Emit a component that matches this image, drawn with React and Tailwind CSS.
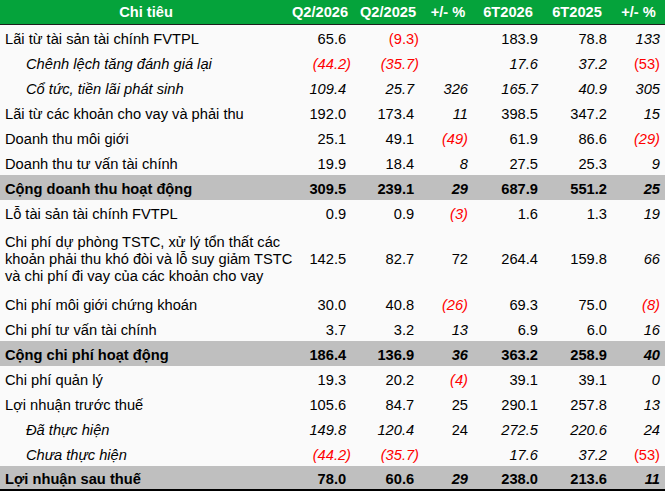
import React from "react";

const COLS = "grid grid-cols-[286px_68px_68px_52px_68px_70px_53px]";

const rows = [
  { l: "Lãi từ tài sản tài chính FVTPL", t: "n", v: ["65.6", "(9.3)", "", "183.9", "78.8", "133"], it: "nnnnni" },
  { l: "Chênh lệch tăng đánh giá lại", t: "s", v: ["(44.2)", "(35.7)", "", "17.6", "37.2", "(53)"], it: "iiniin" },
  { l: "Cổ tức, tiền lãi phát sinh", t: "s", v: ["109.4", "25.7", "326", "165.7", "40.9", "305"], it: "iiiiii" },
  { l: "Lãi từ các khoản cho vay và phải thu", t: "n", v: ["192.0", "173.4", "11", "398.5", "347.2", "15"], it: "nninni" },
  { l: "Doanh thu môi giới", t: "n", v: ["25.1", "49.1", "(49)", "61.9", "86.6", "(29)"], it: "nninni" },
  { l: "Doanh thu tư vấn tài chính", t: "n", v: ["19.9", "18.4", "8", "27.5", "25.3", "9"], it: "nninni" },
  { l: "Cộng doanh thu hoạt động", t: "t", v: ["309.5", "239.1", "29", "687.9", "551.2", "25"], it: "nninni" },
  { l: "Lỗ tài sản tài chính FVTPL", t: "n", v: ["0.9", "0.9", "(3)", "1.6", "1.3", "19"], it: "nninni" },
  {
    l: ["Chi phí dự phòng TSTC, xử lý tổn thất các", "khoản phải thu khó đòi và lỗ suy giảm TSTC", "và chi phí đi vay của các khoản cho vay"],
    t: "n", tall: true, v: ["142.5", "82.7", "72", "264.4", "159.8", "66"], it: "nnnnni",
  },
  { l: "Chi phí môi giới chứng khoán", t: "n", v: ["30.0", "40.8", "(26)", "69.3", "75.0", "(8)"], it: "nninni" },
  { l: "Chi phí tư vấn tài chính", t: "n", v: ["3.7", "3.2", "13", "6.9", "6.0", "16"], it: "nninni" },
  { l: "Cộng chi phí hoạt động", t: "t", v: ["186.4", "136.9", "36", "363.2", "258.9", "40"], it: "nninni" },
  { l: "Chi phí quản lý", t: "n", v: ["19.3", "20.2", "(4)", "39.1", "39.1", "0"], it: "nninni" },
  { l: "Lợi nhuận trước thuế", t: "n", v: ["105.6", "84.7", "25", "290.1", "257.8", "13"], it: "nnnnni" },
  { l: "Đã thực hiện", t: "s", v: ["149.8", "120.4", "24", "272.5", "220.6", "24"], it: "iiniii" },
  { l: "Chưa thực hiện", t: "s", v: ["(44.2)", "(35.7)", "", "17.6", "37.2", "(53)"], it: "iiniin" },
  { l: "Lợi nhuận sau thuế", t: "t", last: true, v: ["78.0", "60.6", "29", "238.0", "213.6", "11"], it: "nninni" },
];

const PADS = ["pr-[3px]", "pr-[3px]", "pr-[6px]", "pr-[4px]", "pr-[5px]", "pr-[5px]"];

function Cell({ value, italic, idx }) {
  const neg = value.startsWith("(");
  const padParen = (idx === 0 || idx === 1) && value && !neg;
  return (
    <div className={`text-right whitespace-nowrap ${PADS[idx]} ${italic ? "italic" : ""} ${neg ? "text-[#ff0000]" : ""}`}>
      {value}
      {padParen && <span className="invisible">)</span>}
    </div>
  );
}

const HEADS = ["Q2/2026", "Q2/2025", "+/- %", "6T2026", "6T2025", "+/- %"];

export default function App() {
  return (
    <div
      className="w-[665px] h-[491px] overflow-hidden bg-[#fafafa] text-black text-[14.67px] leading-[17px]"
      style={{ fontFamily: '"Liberation Sans", Arial, sans-serif' }}
    >
      <div className={`${COLS} h-[25px] items-center bg-[#05a33b] border-b border-[#1e1e1e] text-white font-bold`}>
        <div className="text-center pl-[6px]">Chi tiêu</div>
        {HEADS.map((h, i) => (
          <div key={i} className="text-center whitespace-nowrap">
            {h}
          </div>
        ))}
      </div>
      {rows.map((r, ri) => {
        const total = r.t === "t";
        return (
          <div
            key={ri}
            className={`${COLS} items-center pt-[3px] ${r.tall ? "h-[66px]" : "h-[25px]"} ${total ? "bg-[#bfbfbf] font-bold" : ""} ${r.last ? "border-b-2 border-black" : ""}`}
          >
            <div className={`whitespace-nowrap ${r.t === "s" ? "pl-[26px] italic" : "pl-[5px]"}`}>
              {Array.isArray(r.l) ? r.l.map((line, li) => <div key={li}>{line}</div>) : r.l}
            </div>
            {r.v.map((v, i) => (
              <Cell key={i} value={v} italic={r.it[i] === "i"} idx={i} />
            ))}
          </div>
        );
      })}
    </div>
  );
}
